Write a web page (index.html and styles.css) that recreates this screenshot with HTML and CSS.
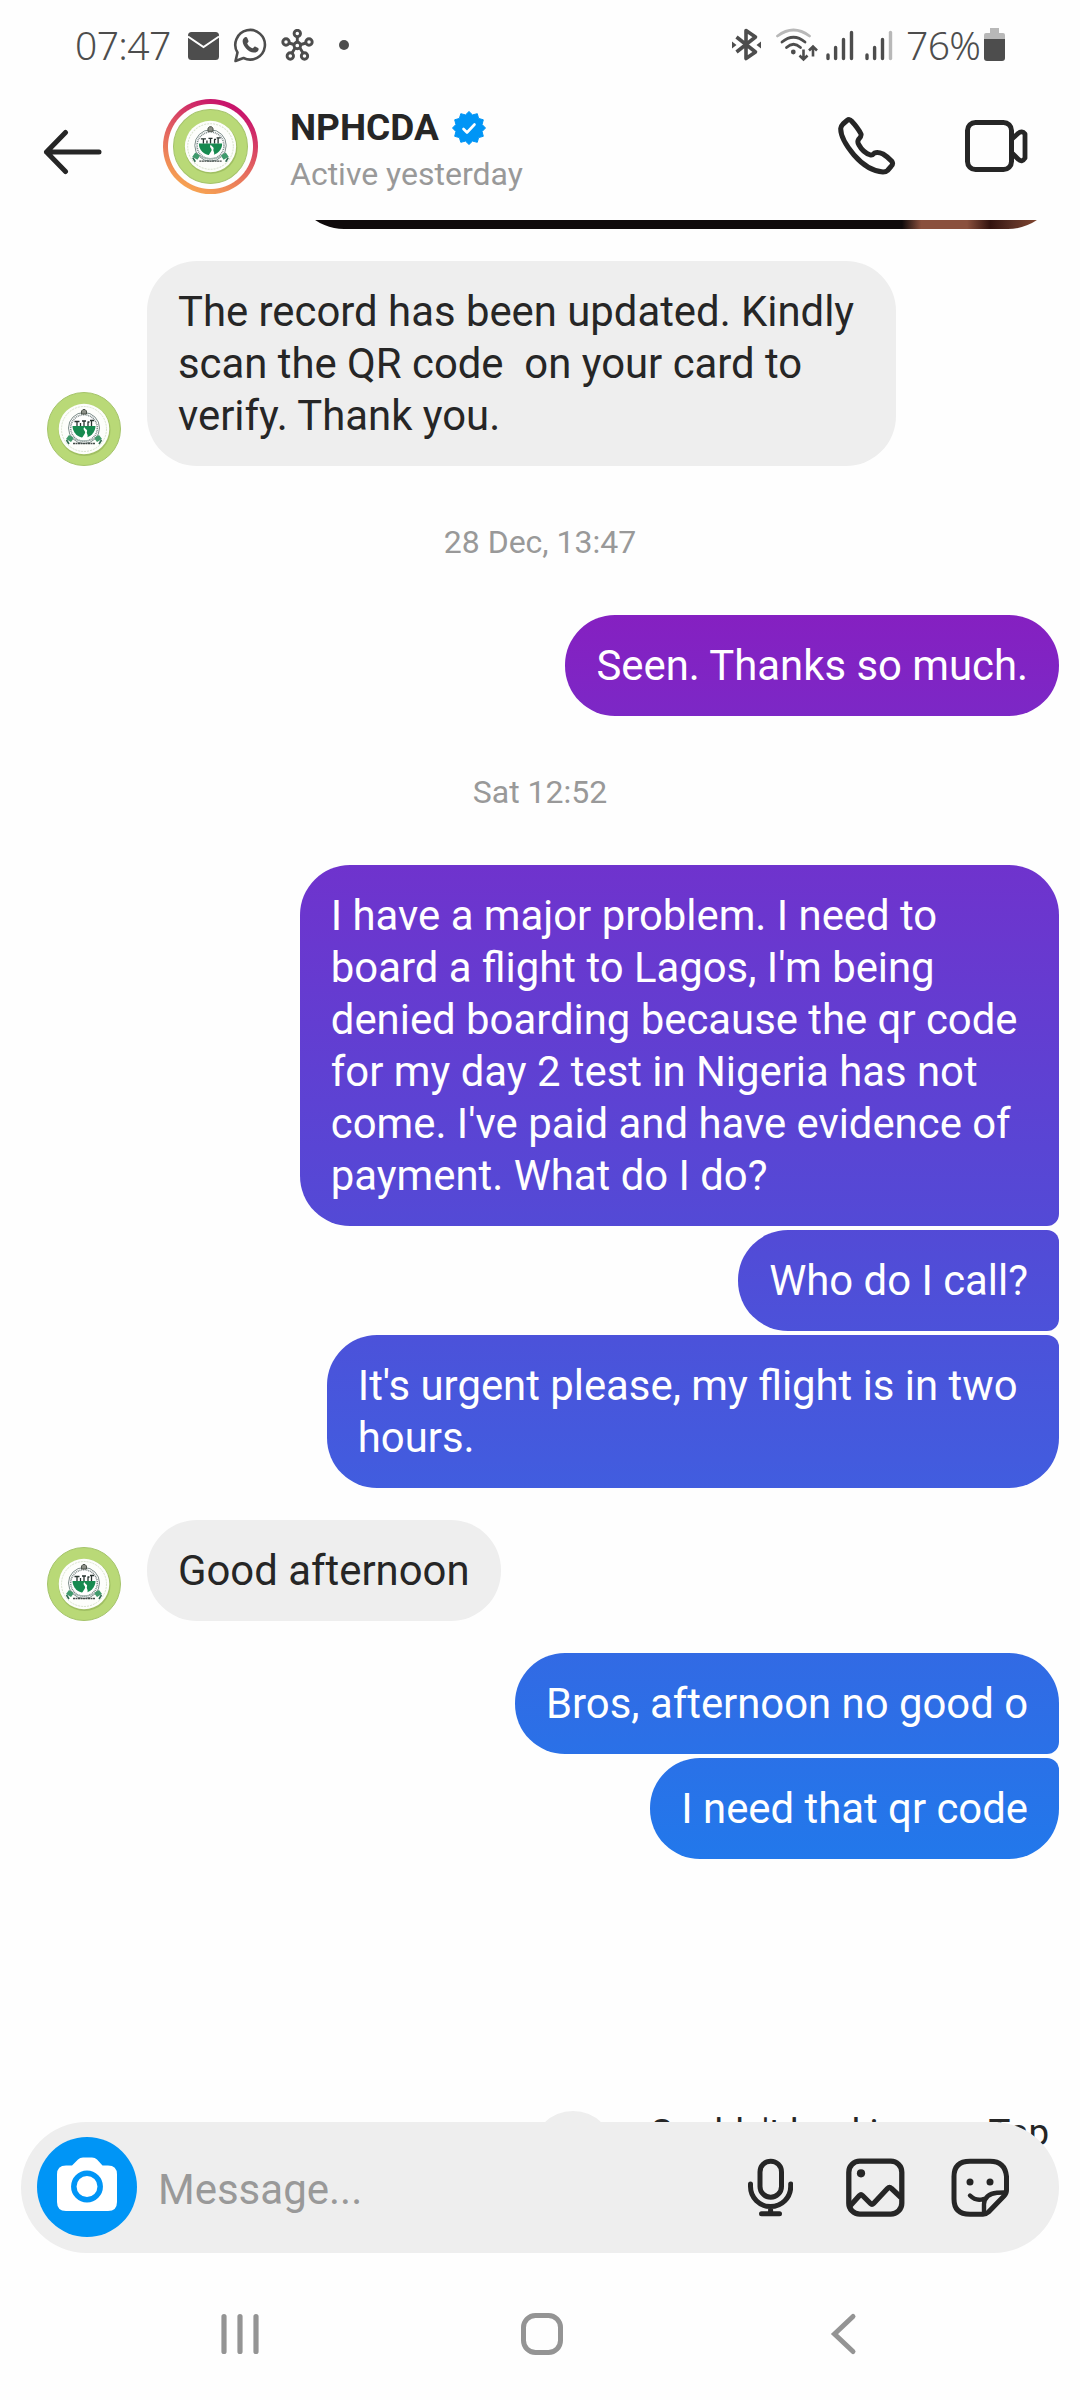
FILE: index.html
```html
<!DOCTYPE html>
<html lang="en">
<head>
  <meta charset="UTF-8">
  <title>NPHCDA - Direct</title>
  <link rel="stylesheet" href="styles.css">
</head>
<body>

<!-- shared logo, used for the header and the message avatars -->
<svg class="defs" width="0" height="0">
  <symbol id="logo" viewBox="0 0 74 74">
    <circle cx="37" cy="37" r="36.5" fill="#b9d977" stroke="#a5c46c"/>
    <circle cx="37.5" cy="38" r="26" fill="#8fae55" opacity=".6"/>
    <circle cx="37" cy="37" r="25.3" fill="#fdfefb"/>
    <circle cx="37" cy="37" r="22.5" fill="none" stroke="#d9e3cf" stroke-width="1" stroke-dasharray="2 1"/>
    <circle cx="37" cy="36" r="15.500" fill="#fff" stroke="#6d7f7c" stroke-width=".9"/>
    <circle cx="37" cy="36" r="13.300" fill="none" stroke="#7b8987" stroke-width="1.6" stroke-dasharray="1 .8"/>
    <path d="M25.5 34h23a11.5 11.5 0 0 1-23 0z" fill="#178a50"/>
    <path d="M37.500 35c-3 3 2.500 4 0 7l-2.500 4h5c2-3-1-4.500 0-6.500s-2.500-2.500-2.500-4.500z" fill="#fff"/>
    <path d="M30 34v-5m3.500 5v-3m3.500 3v-5m4 5v-4m3.500 4v-5M27.500 29.500h5m2.500-.5h4m1.500 1h2m.5-1.500h4" stroke="#26332f" stroke-width="1.300" fill="none"/>
    <path d="M34.500 22v-3l1.500-1.500h2L39.500 19v3z" fill="#8d9088" stroke="#414840" stroke-width=".9"/>
    <path d="M22 43l5 3-3 4-5-3zM52 43l-5 3 3 4 5-3z" fill="#3f9a6b"/>
    <path d="M19.500 48l2.500 4M54.500 48l-2.500 4" stroke="#2f6950" stroke-width="1.600"/>
    <path d="M26 46.500q11 5 22 0" fill="none" stroke="#a9b8b4" stroke-width="1.300"/>
    <path d="M26 51.500h22" stroke="#444c4a" stroke-width="1.300" stroke-dasharray="2 .5"/>
  </symbol>
</svg>

<div class="screen">
  <div class="status-bar">
    <div class="status-left">
      <span class="clock">07:47</span>
      <svg class="mail" width="32" height="30" viewBox="0 0 32 30">
        <rect x="0" y="1" width="31" height="28" rx="3.500" fill="#4d4d4d"/>
        <path d="M0 5.500L15.500 16 31 5.500" fill="none" stroke="#fefefe" stroke-width="2"/>
      </svg>
      <svg class="whatsapp" width="35" height="35" viewBox="0 0 35 35">
        <path d="M2.500 33l2-8.500A14.800 14.800 0 1 1 10.500 30z" fill="none" stroke="#4d4d4d" stroke-width="2.600" stroke-linejoin="round"/>
        <path d="M11 10c1.500-1.500 3-1 3.500.5l1 2.500c.3 1-1.500 2-1.200 2.800 1 2.200 3 3.700 5 4.500 1 .3 1.700-2 2.800-1.700l3 1.500c1 .6.5 2.600-1 3.600-4 2.300-8-.2-10.800-3S8 13 11 10z" fill="#4d4d4d"/>
      </svg>
      <svg class="hub" width="33" height="32" viewBox="0 0 33 32">
        <g fill="none" stroke="#4d4d4d" stroke-width="2.900">
          <path d="M16.300 7.500v5M8 14l5 1.500M25 14l-5 1.500M11 24l3-5M22 24l-3-5"/>
          <circle cx="16.300" cy="16.500" r="3.300"/>
          <circle cx="16.300" cy="4.500" r="3.200"/>
          <circle cx="5" cy="13" r="3.200"/>
          <circle cx="28" cy="13" r="3.200"/>
          <circle cx="9.300" cy="27" r="3.200"/>
          <circle cx="23.500" cy="27" r="3.200"/>
        </g>
      </svg>
      <span class="more-dot"></span>
    </div>
    <div class="status-right">
      <svg class="bluetooth" width="29" height="34" viewBox="0 0 29 34">
        <path d="M4.500 9L23.500 24 14 30.500V2.500L23.500 9 4.500 24" fill="none" stroke="#4d4d4d" stroke-width="3.600" stroke-linejoin="round"/>
        <path d="M0 13.500L4.500 17 0 20.500zM29 13.500L24.500 17l4.500 3.500z" fill="#4d4d4d"/>
      </svg>
      <svg class="wifi" width="42" height="34" viewBox="0 0 42 34">
        <g fill="none" stroke-width="2.800" stroke-linecap="round">
          <path d="M1.500 8Q17.500-4 33.500 8" stroke="#b8b8b8"/>
          <path d="M6 14Q17.500 4.500 29 14" stroke="#4d4d4d"/>
          <path d="M10.500 19.500Q17.500 13 24.500 19.500" stroke="#4d4d4d"/>
        </g>
        <circle cx="17.300" cy="24" r="2.400" fill="#4d4d4d"/>
        <path d="M27.500 21.500V31M23.500 27.500l4 4 4-4M37 28.500V19M33 22.500l4-4 4 4" fill="none" stroke="#4d4d4d" stroke-width="2.600"/>
      </svg>
      <svg class="signal" width="28" height="34" viewBox="0 0 28 34">
        <path d="M2 30.500v-3.500M9.600 30.500v-11M17.500 30.500V11.500M25.500 30.500V4.500" stroke="#4d4d4d" stroke-width="3.400" stroke-linecap="round"/>
      </svg>
      <svg class="signal" width="28" height="34" viewBox="0 0 28 34">
        <path d="M2 30.500v-3.500M9.600 30.500v-11M17.500 30.500V11.500" stroke="#4d4d4d" stroke-width="3.400" stroke-linecap="round"/>
        <path d="M25.500 30.500V4.500" stroke="#b8b8b8" stroke-width="3.400" stroke-linecap="round"/>
      </svg>
      <span class="percent">76%</span>
      <svg class="battery" width="21" height="34" viewBox="0 0 21 34">
        <path d="M6 0h9v5h4a2 2 0 0 1 2 2v4H0V7a2 2 0 0 1 2-2h4z" fill="#b8b8b8"/>
        <path d="M0 11h21v19a3 3 0 0 1-3 3H3a3 3 0 0 1-3-3z" fill="#4d4d4d"/>
      </svg>
    </div>
  </div>

  <header class="chat-header">
    <svg class="back" width="60" height="46" viewBox="0 0 60 46">
      <path d="M22.500 3.500L3.500 23l19 19.500M3.500 23H56" fill="none" stroke="#262626" stroke-width="5" stroke-linecap="round" stroke-linejoin="round"/>
    </svg>
    <div class="story-ring">
      <svg class="story-logo"><use href="#logo"/></svg>
    </div>
    <div class="contact">
      <div class="contact-name">
        NPHCDA
        <svg width="34" height="34" viewBox="0 0 34 34">
          <path d="M17.0 0.5L20.5 3.9L25.3 2.7L26.6 7.4L31.3 8.8L30.1 13.5L33.5 17.0L30.1 20.5L31.3 25.3L26.6 26.6L25.3 31.3L20.5 30.1L17.0 33.5L13.5 30.1L8.8 31.3L7.4 26.6L2.7 25.3L3.9 20.5L0.5 17.0L3.9 13.5L2.7 8.8L7.4 7.4L8.8 2.7L13.5 3.9Z" fill="#0095f6" stroke="#0095f6" stroke-linejoin="round"/>
          <path d="M11.500 18l3.500 3.500 7.500-8" fill="none" stroke="#fff" stroke-width="2.600" stroke-linecap="round" stroke-linejoin="round"/>
        </svg>
      </div>
      <div class="contact-status">Active yesterday</div>
    </div>
    <svg class="phone" width="58" height="58" viewBox="0 0 58 58">
      <path d="M9 3.500Q11.500 1.500 13.500 4 20 11 23 17 23.700 19 20.500 22.500 19 25 21 28 25 35.500 32.500 38 34.500 38.500 36.500 36 40 34.500 45 37 50 40 54 44.500 55.500 47 53 49.500L49.500 53.500Q48 55 45 55 30 54 16 38 2.500 22 2.700 11.500 3 9 5 7z" fill="none" stroke="#262626" stroke-width="5" stroke-linejoin="round"/>
    </svg>
    <svg class="video" width="63" height="52" viewBox="0 0 63 52">
      <rect x="2.500" y="2.500" width="44" height="47" rx="8" fill="none" stroke="#262626" stroke-width="5"/>
      <path d="M47.500 18.500L53 13.500Q57 10 60 14V38Q57 43 53 39L47.500 33.500" fill="none" stroke="#262626" stroke-width="4.800" stroke-linejoin="round"/>
    </svg>
  </header>

  <main class="messages">
    <div class="photo"></div>

    <div class="row first">
      <svg class="avatar"><use href="#logo"/></svg>
      <div class="bubble received multiline">The record has been updated. Kindly<br>scan the QR code &nbsp;on your card to<br>verify. Thank you.</div>
    </div>

    <div class="timestamp">28 Dec, 13:47</div>

    <div class="group">
      <div class="bubble sent">Seen. Thanks so much.</div>
    </div>

    <div class="timestamp">Sat 12:52</div>

    <div class="group">
      <div class="bubble sent multiline">I have a major problem. I need to<br>board a flight to Lagos, I'm being<br>denied boarding because the qr code<br>for my day 2 test in Nigeria has not<br>come. I've paid and have evidence of<br>payment. What do I do?</div>
      <div class="bubble sent">Who do I call?</div>
      <div class="bubble sent multiline">It's urgent please, my flight is in two<br>hours.</div>
    </div>

    <div class="row reply">
      <svg class="avatar"><use href="#logo"/></svg>
      <div class="bubble received">Good afternoon</div>
    </div>

    <div class="group">
      <div class="bubble sent">Bros, afternoon no good o</div>
      <div class="bubble sent">I need that qr code</div>
    </div>

    <div class="failed">
      <span class="failed-icon"></span>
      <span>Couldn't load image. Tap</span>
    </div>
  </main>

  <div class="composer">
    <div class="camera">
      <svg width="100" height="100" viewBox="0 0 100 100">
        <path d="M29 28.500h6l6-6q2-2 5-2h9q3 0 5 2l5.500 6H71q9 0 9 9V65q0 9-9 9H29q-9 0-9-9V37.500q0-9 9-9z" fill="#fff"/>
        <circle cx="50" cy="49.500" r="13.200" fill="none" stroke="#0095f6" stroke-width="5.500"/>
      </svg>
    </div>
    <span class="placeholder">Message...</span>
    <svg class="mic" width="45" height="60" viewBox="0 0 45 60">
      <g fill="none" stroke="#262626" stroke-width="5" stroke-linecap="round">
        <rect x="12" y="3.200" width="21.500" height="36" rx="10.700"/>
        <path d="M2.500 26v2.500a20.100 20.100 0 0 0 40.200 0V26M22.600 49v6M13.500 55.700h18"/>
      </g>
    </svg>
    <svg class="gallery" width="59" height="60" viewBox="0 0 59 60">
      <g fill="none" stroke="#262626" stroke-width="5.300" stroke-linejoin="round">
        <rect x="2.800" y="3.200" width="53" height="53" rx="11"/>
        <path d="M4 48L13.500 37.500Q15 36 16.500 37.500L24.500 45.500Q26 47 27.500 45.500L41.500 30.500Q43.500 28.500 45.500 30.500L55 39.500"/>
      </g>
      <circle cx="15" cy="15.300" r="4.100" fill="#262626"/>
    </svg>
    <svg class="sticker" width="59" height="60" viewBox="0 0 59 60">
      <g fill="none" stroke="#262626" stroke-width="5" stroke-linecap="round" stroke-linejoin="round">
        <path d="M32 56.300H19Q3 56.300 3 41V18.500Q3 3.200 19 3.200H39Q54 3.200 55.500 18.500V32Q55.500 35.500 53 38L37.500 54Q35 56.300 32 56.300z"/>
        <path d="M33 54V46Q34 36 46 34.800L54 34.500M19 37.500Q25 43.500 32.500 41" stroke-width="4.400"/>
      </g>
      <circle cx="19" cy="24" r="3.500" fill="#262626"/>
      <circle cx="39" cy="24" r="3.500" fill="#262626"/>
    </svg>
  </div>

  <nav class="nav-bar">
    <svg width="42" height="44" viewBox="0 0 42 44">
      <path d="M5 4.500v35M21 4.500v35M37 4.500v35" stroke="#949494" stroke-width="5.200" stroke-linecap="round"/>
    </svg>
    <svg width="44" height="44" viewBox="0 0 44 44">
      <rect x="3.500" y="3.500" width="37" height="37" rx="12" fill="none" stroke="#949494" stroke-width="5"/>
    </svg>
    <svg width="42" height="44" viewBox="0 0 42 44">
      <path d="M31 4.500L12.500 22 31 39.500" fill="none" stroke="#949494" stroke-width="5" stroke-linecap="round"/>
    </svg>
  </nav>
</div>

</body>
</html>
```
FILE: styles.css
```css
* {
  box-sizing: border-box;
}
body {
  margin: 0;
  font-family: Roboto, "Liberation Sans", sans-serif;
  background: #fefefe;
  color: #262626;
}
svg {
  display: block;
  flex-shrink: 0;
}
.defs {
  position: absolute;
}
.screen {
  width: 1080px;
  height: 2400px;
  display: flex;
  flex-direction: column;
  overflow: hidden;
}

/* status bar */
.status-bar {
  height: 76px;
  padding: 0 75px 0 75px;
  display: flex;
  justify-content: space-between;
  font-family: "Noto Sans", sans-serif;
  font-size: 39px;
  font-weight: 350;
  line-height: 54px;
  letter-spacing: -0.6px;
  color: #4d4d4d;
}
.status-left,
.status-right {
  height: 90px;
  display: flex;
  align-items: center;
}
.clock {
  width: 113px;
}
.mail {
  margin-top: 2px;
}
.whatsapp {
  margin-left: 13px;
}
.hub {
  margin-left: 13px;
}
.more-dot {
  width: 10px;
  height: 10px;
  margin-left: 25px;
  border-radius: 50%;
  background: #4d4d4d;
}
.wifi {
  margin-left: 15px;
  margin-right: 1px;
}
.signal {
  margin-left: 7px;
  margin-right: 4px;
}
.percent {
  width: 78px;
  margin-left: 9px;
}

/* header */
.chat-header {
  height: 144px;
  padding-left: 43px;
  display: flex;
  align-items: center;
}
.back {
  margin-top: 7px;
}
.story-ring {
  width: 95px;
  height: 95px;
  margin-left: 60px;
  margin-top: -3px;
  padding: 5px;
  border-radius: 50%;
  background: radial-gradient(circle, #fefefe 42px, transparent 43px), linear-gradient(25deg, #fbb04f 5%, #e4685f 45%, #c8156b 85%);
}
.story-logo {
  width: 75px;
  height: 75px;
  margin: 5px;
}
.contact {
  width: 548px;
  margin-left: 32px;
  padding-top: 3px;
}
.contact-name {
  display: flex;
  align-items: center;
  gap: 13px;
  font-size: 37px;
  font-weight: 700;
  line-height: 44px;
}
.contact-status {
  margin-top: 4px;
  font-size: 32px;
  line-height: 40px;
  color: #999;
}
.phone {
  margin-top: -4px;
}
.video {
  margin-left: 69px;
  margin-top: -4px;
}

/* messages */
.messages {
  flex: 1;
  min-height: 0;
  overflow: hidden;
  padding-right: 21px;
  display: flex;
  flex-direction: column;
}
.photo {
  flex-shrink: 0;
  align-self: flex-end;
  width: 766px;
  height: 120px;
  margin-top: -111px;
  border-radius: 51px;
  background: linear-gradient(90deg, #0f0a0b 79.5%, #8a503d 82%, #8a503d 88%, #32120e 91%, #5a3025 94%, #8a4a32 98%);
}
.row {
  display: flex;
  align-items: flex-end;
  padding-left: 47px;
  gap: 26px;
}
.row.first {
  margin-top: 32px;
}
.row.reply {
  margin: 32px 0;
}
.avatar {
  width: 74px;
  height: 74px;
}
.bubble {
  padding: 24.500px 31px;
  border-radius: 50px;
  font-size: 41.850px;
  line-height: 52px;
  white-space: nowrap;
}
.multiline {
  padding-right: 41.500px;
}
.received {
  background: #eee;
}
/* one gradient for the whole screen, each bubble shows its own slice */
.sent {
  color: #fff;
  background: linear-gradient(#8520c1 615px, #6f33cd 865px, #534ad6 1226px, #415ddf 1488px, #326ae4 1653px, #2278eb 1859px) fixed;
}
.group {
  display: flex;
  flex-direction: column;
  align-items: flex-end;
  gap: 4px;
}
.group .sent:not(:last-child) {
  border-bottom-right-radius: 12px;
}
.group .sent:not(:first-child) {
  border-top-right-radius: 12px;
}
.timestamp {
  padding: 57px 0 54px 21px;
  font-size: 32px;
  line-height: 38px;
  text-align: center;
  color: #999;
}
.failed {
  display: flex;
  justify-content: flex-end;
  margin-top: 252px;
  padding-right: 10px;
  gap: 35px;
  font-size: 36.700px;
  line-height: 44px;
  white-space: nowrap;
}
.failed-icon {
  width: 82px;
  height: 82px;
  border-radius: 50%;
  background: #eee;
}

/* composer lies over the end of the message list */
.composer {
  position: relative;
  height: 131px;
  margin: -131px 21px 0;
  padding-left: 16px;
  display: flex;
  align-items: center;
  border-radius: 66px;
  background: #eee;
}
.camera {
  width: 100px;
  height: 100px;
  margin-bottom: 2px;
  border-radius: 50%;
  background: #0095f6;
}
.placeholder {
  width: 590px;
  margin-left: 21px;
  padding-top: 3px;
  font-size: 42px;
  color: #999;
}
.gallery {
  margin-left: 53px;
}
.sticker {
  margin-left: 46px;
}

/* android navigation */
.nav-bar {
  height: 147px;
  padding: 0 216px 0 219px;
  display: flex;
  align-items: center;
  justify-content: space-between;
}
.nav-bar svg {
  margin-top: 15px;
}
```
